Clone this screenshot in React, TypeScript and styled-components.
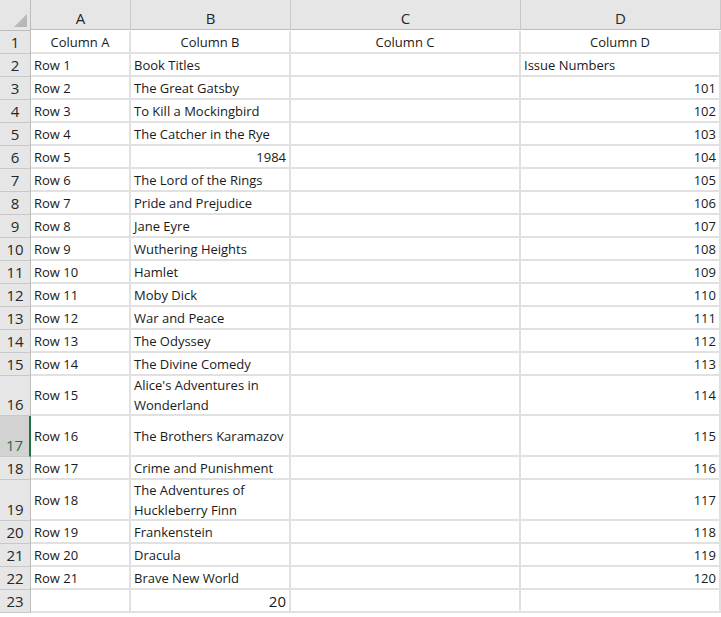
import React from "react";
import styled, { createGlobalStyle } from "styled-components";

const Global = createGlobalStyle`
  body { margin: 0; background: #fff; font-family: "Open Sans", "Noto Sans", sans-serif; }
`;

const titles = [
  "The Great Gatsby", "To Kill a Mockingbird", "The Catcher in the Rye", "1984",
  "The Lord of the Rings", "Pride and Prejudice", "Jane Eyre", "Wuthering Heights",
  "Hamlet", "Moby Dick", "War and Peace", "The Odyssey", "The Divine Comedy",
  "Alice's Adventures in Wonderland", "The Brothers Karamazov", "Crime and Punishment",
  "The Adventures of Huckleberry Finn", "Frankenstein", "Dracula", "Brave New World",
];
const tall: Record<number, number> = { 16: 40, 17: 41, 19: 41 };

const Sheet = styled.div`
  display: grid;
  grid-template-columns: 31px 100px 160px 230px 200px;
  width: 721px;
  height: 617px;
  overflow: hidden;
  align-content: start;
`;

const Corner = styled.div`
  height: 30px;
  background: #e6e6e6;
  border-right: 1px solid #bdbdbd;
  border-bottom: 1px solid #bdbdbd;
  position: relative;
  &::after {
    content: "";
    position: absolute;
    right: 3px;
    bottom: 3px;
    border-left: 13px solid transparent;
    border-bottom: 13px solid #b8b8b8;
  }
`;

const ColHead = styled.div`
  height: 30px;
  background: #e6e6e6;
  border-right: 1px solid #c8c8c8;
  border-bottom: 1px solid #bdbdbd;
  display: flex;
  align-items: center;
  justify-content: center;
  font-size: 15px;
  color: #262626;
  padding-top: 6px;
  box-sizing: border-box;
`;

const RowHead = styled.div<{ $h: number; $sel?: boolean }>`
  height: ${(p) => p.$h}px;
  box-sizing: border-box;
  background: ${(p) => (p.$sel ? "#d2d2d2" : "#e6e6e6")};
  border-right: ${(p) => (p.$sel ? "2px solid #217346" : "1px solid #bdbdbd")};
  border-bottom: 1px solid #c8c8c8;
  display: flex;
  align-items: flex-end;
  justify-content: center;
  padding-bottom: 1px;
  font-size: 15px;
  color: ${(p) => (p.$sel ? "#217346" : "#262626")};
  line-height: 20px;
`;

const Cell = styled.div<{ $h: number; $align?: string; $big?: boolean }>`
  height: ${(p) => p.$h}px;
  box-sizing: border-box;
  border-right: 2px solid #e1e1e1;
  border-bottom: 2px solid #e1e1e1;
  display: flex;
  align-items: center;
  justify-content: ${(p) => p.$align || "flex-start"};
  text-align: ${(p) => (p.$align === "center" ? "center" : "left")};
  padding: 0 3px 0 3px;
  font-size: ${(p) => (p.$big ? "15px" : "13px")};
  line-height: 20px;
  color: #1a1a1a;
  white-space: normal;
  overflow: hidden;
`;

export default function App() {
  const rows: { a: string; b: string; c: string; d: string; bAlign?: string; dAlign?: string; center?: boolean; big?: boolean }[] = [];
  rows.push({ a: "Column A", b: "Column B", c: "Column C", d: "Column D", center: true });
  rows.push({ a: "Row 1", b: "Book Titles", c: "", d: "Issue Numbers" });
  titles.forEach((t, i) =>
    rows.push({
      a: `Row ${i + 2}`,
      b: t,
      c: "",
      d: String(101 + i),
      bAlign: t === "1984" ? "flex-end" : undefined,
      dAlign: "flex-end",
    })
  );
  rows.push({ a: "", b: "20", c: "", d: "", bAlign: "flex-end", big: true });

  return (
    <>
      <Global />
      <Sheet>
        <Corner />
        {["A", "B", "C", "D"].map((c) => (
          <ColHead key={c}>{c}</ColHead>
        ))}
        {rows.map((r, i) => {
          const n = i + 1;
          const h = tall[n] || 23;
          const al = r.center ? "center" : undefined;
          return (
            <React.Fragment key={n}>
              <RowHead $h={h} $sel={n === 17}>{n}</RowHead>
              <Cell $h={h} $align={al}>{r.a}</Cell>
              <Cell $h={h} $align={al || r.bAlign} $big={r.big}>{r.b}</Cell>
              <Cell $h={h} $align={al}>{r.c}</Cell>
              <Cell $h={h} $align={al || r.dAlign}>{r.d}</Cell>
            </React.Fragment>
          );
        })}
      </Sheet>
    </>
  );
}
